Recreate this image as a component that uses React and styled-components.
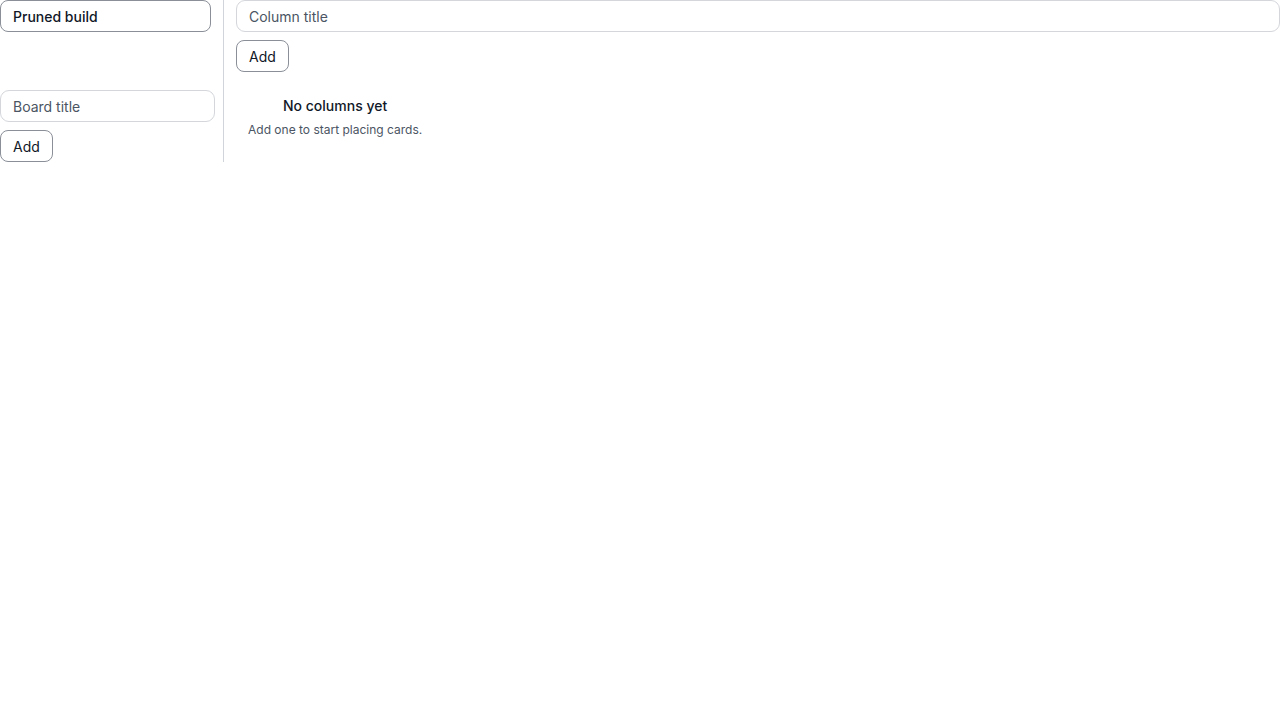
import React from "react";
import styled, { createGlobalStyle } from "styled-components";

const Global = createGlobalStyle`
  html, body { margin: 0; padding: 0; background: #fff; }
  body { font-family: Inter, "Noto Sans", sans-serif; color: #111827; }
  * { box-sizing: border-box; }
`;

const Layout = styled.div`
  display: flex;
  align-items: flex-start;
`;

const Sidebar = styled.aside`
  width: 224px;
  flex: none;
  border-right: 1px solid #d1d5db;
  display: flex;
  flex-direction: column;
`;

const BoardButton = styled.button`
  width: 211px;
  height: 32px;
  padding: 0 12px;
  text-align: left;
  font: 500 14px Inter, sans-serif;
  color: #111827;
  background: #fff;
  border: 1px solid #8b8f98;
  border-radius: 8px;
`;

const BoardForm = styled.div`
  margin-top: 58px;
  display: flex;
  flex-direction: column;
  gap: 8px;
  align-items: flex-start;
`;

const Input = styled.input`
  width: ${(p) => p.$w || "100%"};
  height: 32px;
  padding: 0 12px;
  font: 400 14px Inter, sans-serif;
  color: #111827;
  border: 1px solid #d4d6db;
  border-radius: 9px;
  background: #fff;
  outline: none;
  &::placeholder { color: #4b5563; }
`;

const Button = styled.button`
  height: 32px;
  padding: 0 12px;
  font: 400 14px Inter, sans-serif;
  color: #111827;
  background: #fff;
  border: 1px solid #8b8f98;
  border-radius: 8px;
`;

const Main = styled.main`
  flex: 1;
  padding-left: 12px;
  display: flex;
  flex-direction: column;
  gap: 8px;
  align-items: flex-start;
`;

const Empty = styled.div`
  margin-top: 4px;
  padding: 12px;
  text-align: center;
`;

const EmptyTitle = styled.div`
  font: 500 14px/20px Inter, sans-serif;
  color: #111827;
`;

const EmptyText = styled.div`
  margin-top: 6px;
  font: 400 12px/16px Inter, sans-serif;
  color: #4b5563;
`;

export default function App() {
  return (
    <>
      <Global />
      <Layout>
        <Sidebar>
          <BoardButton>Pruned build</BoardButton>
          <BoardForm>
            <Input $w="215px" placeholder="Board title" />
            <Button>Add</Button>
          </BoardForm>
        </Sidebar>
        <Main>
          <Input placeholder="Column title" />
          <Button>Add</Button>
          <Empty>
            <EmptyTitle>No columns yet</EmptyTitle>
            <EmptyText>Add one to start placing cards.</EmptyText>
          </Empty>
        </Main>
      </Layout>
    </>
  );
}
